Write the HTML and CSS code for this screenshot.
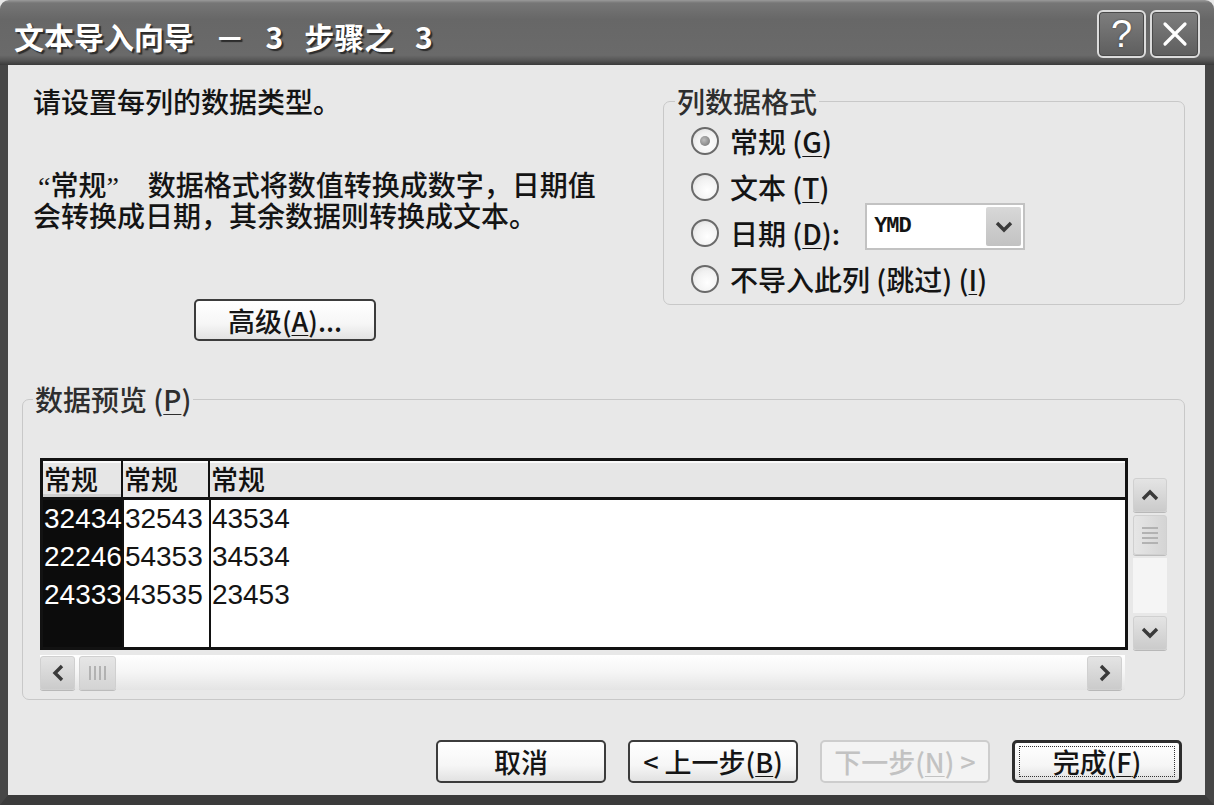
FILE: index.html
```html
<!DOCTYPE html>
<html lang="zh-CN">
<head>
<meta charset="utf-8">
<title>文本导入向导 - 3 步骤之 3</title>
<link rel="stylesheet" href="styles.css">
</head>
<body>
<div class="window">
  <div class="titlebar">
    <div class="title">文本导入向导 － 3 步骤之 3</div>
    <div class="caption-buttons">
      <div class="cap-btn help">?</div>
      <div class="cap-btn close">
        <svg width="30" height="30" viewBox="0 0 30 30"><path d="M5 5 L25 25 M25 5 L5 25" stroke="#fff" stroke-width="3.2" stroke-linecap="round" fill="none"/></svg>
      </div>
    </div>
  </div>
  <div class="client">
    <div class="top-row">
      <div class="intro">
        <p class="intro-line">请设置每列的数据类型。</p>
        <p class="intro-desc"><span class="quoted">“常规”</span> 数据格式将数值转换成数字，日期值<br>会转换成日期，其余数据则转换成文本。</p>
        <button class="btn btn-adv">高级(<u>A</u>)...</button>
      </div>
      <fieldset class="group format-group">
        <legend>列数据格式</legend>
        <div class="radio-row"><span class="radio checked"></span><span class="radio-label">常规 (<u>G</u>)</span></div>
        <div class="radio-row"><span class="radio"></span><span class="radio-label">文本 (<u>T</u>)</span></div>
        <div class="radio-row"><span class="radio"></span><span class="radio-label">日期 (<u>D</u>):</span>
          <div class="combo">
            <span class="combo-value">YMD</span>
            <span class="combo-btn"><svg width="20" height="14" viewBox="0 0 20 14"><path d="M3 3 L10 10 L17 3" stroke="#3a3a3a" stroke-width="3.4" fill="none"/></svg></span>
          </div>
        </div>
        <div class="radio-row"><span class="radio"></span><span class="radio-label">不导入此列 (跳过) (<u>I</u>)</span></div>
      </fieldset>
    </div>

    <fieldset class="group preview-group">
      <legend>数据预览 (<u>P</u>)</legend>
      <div class="grid-row">
        <div class="preview-table">
          <div class="pt-head">
            <div class="pt-h c1">常规</div>
            <div class="pt-h c2">常规</div>
            <div class="pt-h c3">常规</div>
          </div>
          <div class="pt-body">
            <div class="pt-col c1"><div class="cell">32434</div><div class="cell">22246</div><div class="cell">24333</div></div>
            <div class="pt-col c2"><div class="cell">32543</div><div class="cell">54353</div><div class="cell">43535</div></div>
            <div class="pt-col c3"><div class="cell">43534</div><div class="cell">34534</div><div class="cell">23453</div></div>
          </div>
        </div>
        <div class="vscroll">
          <div class="sb-btn"><svg width="20" height="14" viewBox="0 0 20 14"><path d="M3 11 L10 4 L17 11" stroke="#3a3a3a" stroke-width="3.4" fill="none"/></svg></div>
          <div class="sb-thumb v"><span></span><span></span><span></span><span></span></div>
          <div class="sb-track"></div>
          <div class="sb-btn"><svg width="20" height="14" viewBox="0 0 20 14"><path d="M3 3 L10 10 L17 3" stroke="#3a3a3a" stroke-width="3.4" fill="none"/></svg></div>
        </div>
      </div>
      <div class="hscroll">
        <div class="sb-btn h"><svg width="14" height="20" viewBox="0 0 14 20"><path d="M11 3 L4 10 L11 17" stroke="#3a3a3a" stroke-width="3.4" fill="none"/></svg></div>
        <div class="sb-thumb h"><span></span><span></span><span></span><span></span></div>
        <div class="sb-track h"></div>
        <div class="sb-btn h"><svg width="14" height="20" viewBox="0 0 14 20"><path d="M3 3 L10 10 L3 17" stroke="#3a3a3a" stroke-width="3.4" fill="none"/></svg></div>
      </div>
    </fieldset>

    <div class="button-row">
      <button class="btn btn-wide">取消</button>
      <button class="btn btn-wide">&lt; 上一步(<u>B</u>)</button>
      <button class="btn btn-wide disabled">下一步(<u>N</u>) &gt;</button>
      <button class="btn btn-wide default"><span class="focus">完成(<u>F</u>)</span></button>
    </div>
  </div>
</div>
</body>
</html>
```
FILE: styles.css
```css
* { box-sizing: border-box; }
html, body { margin: 0; padding: 0; }
body {
  width: 1214px;
  height: 805px;
  overflow: hidden;
  background: #e8e8e8;
  font-family: "Noto Sans CJK SC", "Noto Sans", sans-serif;
  font-weight: 500;
  color: #141414;
}
.window {
  width: 1214px;
  height: 805px;
  display: flex;
  flex-direction: column;
}

/* ---------- title bar ---------- */
.titlebar {
  flex: 0 0 65px;
  display: flex;
  align-items: flex-start;
  justify-content: space-between;
  padding: 10px 14px 0 14px;
  border-radius: 9px 9px 0 0;
  background: linear-gradient(#9a9a9a 0, #767676 3px, #676767 30%, #6a6a6a 85%, #555 93%, #3a3a3a 100%);
}
.title {
  margin-top: 6px;
  line-height: 40px;
  font-size: 30px;
  font-weight: 700;
  color: #fff;
  word-spacing: 14px;
  white-space: pre;
  text-shadow: 2px 2px 1px #2c2c2c;
}
.caption-buttons {
  display: flex;
  gap: 4px;
}
.cap-btn {
  width: 49px;
  height: 48px;
  border: 2px solid #dcdcdc;
  border-radius: 6px;
  background: linear-gradient(#7e7e7e, #5e5e5e);
  box-shadow: inset 0 0 0 1px #4a4a4a;
  display: flex;
  align-items: center;
  justify-content: center;
  color: #fff;
}
.cap-btn.help {
  font-family: "Liberation Sans", sans-serif;
  font-size: 38px;
  line-height: 1;
  text-shadow: 0 0 2px #333;
}
.cap-btn.close { width: 50px; }

/* ---------- client ---------- */
.client {
  flex: 1;
  display: flex;
  flex-direction: column;
  background: #e8e8e8;
  border-left: 8px solid #464646;
  border-right: 9px solid #464646;
  border-bottom: 10px solid #3b3b3b;
  padding: 21px 20px 0 14px;
}
.top-row {
  display: flex;
  align-items: flex-start;
}
.intro {
  flex: 0 0 641px;
  padding-left: 11px;
  display: flex;
  flex-direction: column;
  align-items: flex-start;
}
.intro-line, .intro-desc {
  margin: 0;
  font-size: 28px;
  line-height: 30px;
}
.intro-desc {
  margin-top: 55px;
  font-family: "Liberation Serif", "Noto Sans CJK SC", sans-serif;
  font-size: 28px;
  line-height: 31px;
}
.quoted {
  padding-left: 5px;
  margin-right: 22px;
}

/* ---------- buttons ---------- */
.btn {
  font-family: "Noto Sans CJK SC", sans-serif;
  font-weight: 500;
  font-size: 27px;
  color: #151515;
  height: 43px;
  padding: 0;
  border: 2px solid #3c3c3c;
  border-radius: 5px;
  background: linear-gradient(#ffffff 0%, #f6f6f6 60%, #e2e2e2 100%);
  display: flex;
  align-items: center;
  justify-content: center;
  line-height: 1;
}
.btn-adv {
  margin-top: 66px;
  margin-left: 161px;
  width: 182px;
  height: 42px;
}
.button-row {
  margin-top: 40px;
  padding-right: 3px;
  display: flex;
  justify-content: flex-end;
  gap: 22px;
}
.btn-wide { width: 170px; }
.btn.disabled {
  color: #c2c2c2;
  border-color: #cdcdcd;
  background: #f3f3f3;
}
.btn.default {
  border: 3px solid #2e2e2e;
}
.btn .focus {
  display: flex;
  align-items: center;
  justify-content: center;
  width: 156px;
  height: 31px;
  border: 1px dotted #333;
}

/* ---------- group boxes ---------- */
.group {
  margin: 0;
  border: 1px solid #c8c8c8;
  border-radius: 7px;
  min-width: 0;
}
.group legend {
  padding: 0 2px;
  font-size: 28px;
  line-height: 30px;
  color: #2e2e2e;
}
.format-group {
  flex: 0 0 522px;
  padding: 2px 10px 2px 11px;
}
.radio-row {
  height: 46px;
  padding-left: 16px;
  display: flex;
  align-items: center;
}
.radio {
  flex: 0 0 28px;
  width: 28px;
  height: 28px;
  border: 2px solid #6a6a6a;
  border-radius: 50%;
  background: radial-gradient(circle at 60% 65%, #ffffff 0%, #f1f1f1 55%, #d6d6d6 100%);
  display: flex;
  align-items: center;
  justify-content: center;
  margin-right: 11px;
}
.radio.checked::after {
  content: "";
  width: 10px;
  height: 10px;
  border-radius: 50%;
  background: radial-gradient(circle at 40% 40%, #bdbdbd, #6f6f6f);
}
.radio-label {
  font-size: 28px;
  line-height: 30px;
  white-space: nowrap;
}
.combo {
  margin-left: 25px;
  margin-bottom: 13px;
  width: 160px;
  height: 47px;
  border: 2px solid #c2c2c2;
  background: #fff;
  display: flex;
  align-items: center;
  justify-content: space-between;
  padding: 2px 2px 2px 7px;
}
.combo-value {
  font-family: "Liberation Mono", monospace;
  font-weight: 700;
  font-size: 22px;
  letter-spacing: -1px;
}
.combo-btn {
  width: 35px;
  height: 39px;
  border-radius: 2px;
  background: linear-gradient(#d8d8d8, #c2c2c2);
  display: flex;
  align-items: center;
  justify-content: center;
}

/* ---------- preview ---------- */
.preview-group {
  margin-top: 43px;
  padding: 44px 17px 9px 17px;
}
.preview-group legend { margin-left: -7px; }
.grid-row {
  display: flex;
  align-items: flex-start;
  gap: 5px;
}
.preview-table {
  flex: 0 0 1088px;
  height: 192px;
  border: 3px solid #121212;
  background: #fff;
  display: flex;
  flex-direction: column;
}
.pt-head {
  flex: 0 0 39px;
  display: flex;
  background: #e6e6e6;
  border-bottom: 3px solid #121212;
  box-shadow: inset 0 2px 0 #fafafa;
}
.pt-h {
  font-size: 27px;
  line-height: 36px;
  padding-left: 1px;
  color: #111;
}
.c1 { flex: 0 0 80px; border-right: 2px solid #121212; }
.c2 { flex: 0 0 87px; border-right: 2px solid #121212; }
.c3 { flex: 1; }
.pt-h.c1 { box-shadow: inset 0 -3px 0 #cfcfcf; }
.pt-body {
  flex: 1;
  display: flex;
}
.pt-col.c1 { background: #0c0c0c; color: #fff; }
.cell {
  height: 38px;
  line-height: 38px;
  padding-left: 1px;
  font-family: "Liberation Sans", sans-serif;
  font-weight: 400;
  font-size: 28px;
  letter-spacing: 0;
}

/* ---------- scrollbars ---------- */
.vscroll {
  margin-top: 20px;
  width: 34px;
  height: 172px;
  display: flex;
  flex-direction: column;
  gap: 3px;
}
.sb-btn {
  flex: 0 0 34px;
  height: 34px;
  width: 34px;
  border: 1px solid #d0d0d0;
  border-radius: 3px;
  background: linear-gradient(#e4e4e4, #cbcbcb);
  box-shadow: 0 1px 0 #b8b8b8;
  display: flex;
  align-items: center;
  justify-content: center;
}
.sb-thumb {
  flex: 0 0 40px;
  border: 1px solid #d0d0d0;
  border-radius: 3px;
  background: linear-gradient(90deg, #e6e6e6, #d4d4d4);
  box-shadow: 0 1px 0 #bcbcbc;
  display: flex;
  flex-direction: column;
  align-items: center;
  justify-content: center;
  gap: 3px;
}
.sb-thumb.v span {
  width: 16px;
  height: 2px;
  background: #b2b2b2;
}
.sb-track {
  flex: 1;
  background: #f5f5f5;
}
.hscroll {
  margin-top: 5px;
  width: 1085px;
  height: 35px;
  padding-right: 3px;
  display: flex;
  align-items: center;
  background: linear-gradient(#ffffff, #f5f5f5 50%, #e4e4e4);
}
.sb-btn.h {
  flex: 0 0 35px;
  width: 35px;
  height: 34px;
}
.sb-thumb.h {
  flex: 0 0 37px;
  height: 34px;
  margin-left: 4px;
  flex-direction: row;
  background: linear-gradient(#e6e6e6, #d4d4d4);
}
.sb-thumb.h span {
  width: 2px;
  height: 14px;
  background: #b2b2b2;
}
.sb-track.h { background: transparent; height: 34px; }
u { text-decoration-thickness: 1px; text-underline-offset: 3px; }
```
